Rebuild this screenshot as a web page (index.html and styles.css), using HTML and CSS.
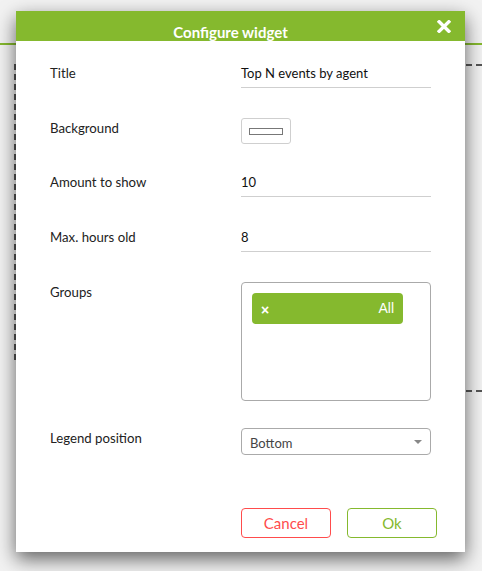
FILE: index.html
```html
<!DOCTYPE html>
<html>
<head>
<meta charset="utf-8">
<link rel="stylesheet" href="styles.css">
</head>
<body>
<div class="page">
  <div class="topline"></div>
  <div class="widgets">
    <div class="widget-left"></div>
    <div class="col-right">
      <div class="widget-r1"></div>
      <div class="widget-r2"></div>
    </div>
  </div>
</div>

<div class="modal">
  <div class="modal-header">
    <span class="modal-title">Configure widget</span>
    <span class="close-btn">
      <svg width="14" height="13" viewBox="0 0 14 13"><path d="M2.2 1.8 L11.8 11.2 M11.8 1.8 L2.2 11.2" stroke="#fff" stroke-width="3.4" stroke-linecap="square" fill="none"/></svg>
    </span>
  </div>
  <div class="modal-body">
    <div class="field">
      <div class="label">Title</div>
      <div class="input">Top N events by agent</div>
    </div>
    <div class="field field-bg">
      <div class="label">Background</div>
      <div class="color-btn"><span class="swatch"></span></div>
    </div>
    <div class="field">
      <div class="label">Amount to show</div>
      <div class="input">10</div>
    </div>
    <div class="field">
      <div class="label">Max. hours old</div>
      <div class="input">8</div>
    </div>
    <div class="field field-groups">
      <div class="label">Groups</div>
      <div class="multi">
        <div class="chip"><span class="chip-x">×</span><span class="chip-label">All</span></div>
      </div>
    </div>
    <div class="field field-legend">
      <div class="label">Legend position</div>
      <div class="select"><span>Bottom</span><span class="caret"></span></div>
    </div>
    <div class="footer">
      <button class="btn btn-cancel">Cancel</button>
      <button class="btn btn-ok">Ok</button>
    </div>
  </div>
</div>
</body>
</html>
```

FILE: styles.css
```css
html, body {
  margin: 0;
  padding: 0;
}
body {
  width: 482px;
  height: 571px;
  overflow: hidden;
  background: #f2f2f2;
  font-family: Lato, "Open Sans", sans-serif;
  position: relative;
}
.page {
  padding-top: 43px;
}
.topline {
  height: 2px;
  background: #85b92e;
}
.widgets {
  display: flex;
  margin-top: 19px;
}
.widget-left {
  margin-left: 14px;
  width: 430px;
  height: 292px;
  border: 2px dashed #555;
  border-right: none;
}
.col-right {
  margin-left: auto;
  width: 16px;
  display: flex;
  flex-direction: column;
}
.widget-r1 {
  height: 324px;
  border-top: 2px dashed #555;
}
.widget-r2 {
  height: 100px;
  border-top: 2px dashed #555;
}

.modal {
  position: absolute;
  left: 16px;
  top: 11px;
  width: 449px;
  height: 541px;
  background: #fff;
  box-shadow: 0 7px 18px rgba(0, 0, 0, 0.6);
  display: flex;
  flex-direction: column;
}
.modal-header {
  height: 30px;
  background: #85b92e;
  overflow: hidden;
  position: relative;
  display: flex;
  justify-content: center;
  padding-right: 20px;
  box-sizing: border-box;
}
.modal-title {
  color: #fff;
  font-weight: 700;
  font-size: 15px;
  line-height: 18px;
  padding-top: 12px;
}
.close-btn {
  position: absolute;
  right: 14px;
  top: 9px;
  width: 14px;
  height: 13px;
}
.close-btn svg {
  display: block;
}
.modal-body {
  padding: 22px 28px 14px 34px;
  flex: 1;
  display: flex;
  flex-direction: column;
}
.field {
  display: flex;
  align-items: flex-start;
  height: 55px;
}
.field-bg {
  height: 54px;
}
.field-groups {
  height: 146px;
}
.field-legend {
  height: 80px;
}
.label {
  width: 191px;
  flex: none;
  font-size: 13.2px;
  line-height: 20px;
  color: #222;
}
.input {
  width: 190px;
  height: 24px;
  border-bottom: 1px solid #cfcfcf;
  font-size: 13px;
  line-height: 20px;
  color: #111;
}
.color-btn {
  width: 50px;
  height: 26px;
  box-sizing: border-box;
  border: 1px solid #cfcfcf;
  border-radius: 3px;
  display: flex;
  align-items: center;
  justify-content: center;
}
.swatch {
  width: 34px;
  height: 7px;
  box-sizing: border-box;
  border: 1px solid #777;
  background: #fff;
}
.multi {
  width: 190px;
  height: 119px;
  box-sizing: border-box;
  border: 1px solid #aaa;
  border-radius: 4px;
  padding: 10px;
}
.chip {
  width: 151px;
  height: 31px;
  background: #85b92e;
  border-radius: 4px;
  display: flex;
  align-items: center;
  justify-content: space-between;
  padding: 0 9px 2px 9px;
  box-sizing: border-box;
  color: #fff;
}
.chip-x {
  font-family: "Liberation Sans", Arial, sans-serif;
  font-weight: 700;
  font-size: 14px;
  line-height: 14px;
  padding-top: 4px;
}
.chip-label {
  font-family: "Liberation Sans", Arial, sans-serif;
  font-size: 14px;
  line-height: 16px;
}
.select {
  width: 190px;
  height: 27px;
  box-sizing: border-box;
  border: 1px solid #aaa;
  border-radius: 4px;
  display: flex;
  align-items: center;
  justify-content: space-between;
  padding: 2px 8px 0 8px;
  font-size: 13px;
  color: #444;
}
.caret {
  width: 0;
  height: 0;
  border-left: 4px solid transparent;
  border-right: 4px solid transparent;
  border-top: 4px solid #888;
  margin-top: -2px;
}
.footer {
  display: flex;
  justify-content: flex-end;
  gap: 16px;
}
.btn {
  width: 90px;
  height: 30px;
  background: #fff;
  border-radius: 4px;
  font-family: Lato, sans-serif;
  font-size: 15px;
  padding: 0 0 1px 0;
  cursor: pointer;
}
.btn-cancel {
  border: 1px solid #ff4c4c;
  color: #ff4c4c;
}
.btn-ok {
  border: 1px solid #85b92e;
  color: #85b92e;
}
```
